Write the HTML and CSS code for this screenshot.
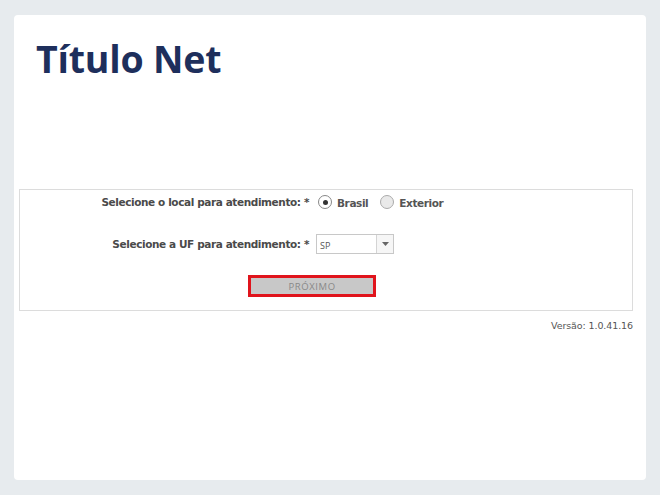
FILE: index.html
```html
<!DOCTYPE html>
<html lang="pt-BR">
<head>
<meta charset="utf-8">
<title>Título Net</title>
<link rel="stylesheet" href="styles.css">
</head>
<body>
<div class="card">
  <h1 class="title">Título Net</h1>
  <div class="form">
    <div class="row">
      <span class="label">Selecione o local para atendimento: *</span>
      <span class="radios">
        <span class="radio checked"></span><span class="opt">Brasil</span>
        <span class="radio"></span><span class="opt">Exterior</span>
      </span>
    </div>
    <div class="row row2">
      <span class="label">Selecione a UF para atendimento: *</span>
      <span class="select"><span class="val">SP</span><span class="arrow"><svg width="7" height="4" viewBox="0 0 7 4"><path d="M0 0h7L3.5 4z" fill="#666"/></svg></span></span>
    </div>
    <div class="btnrow">
      <span class="btn">PRÓXIMO</span>
    </div>
  </div>
  <div class="version">Versão: 1.0.41.16</div>
</div>
</body>
</html>
```
FILE: styles.css
```css
html, body { margin: 0; padding: 0; }
body {
  background: #e7ebee;
  width: 660px;
  height: 495px;
  padding: 15px 14px 15px 14px;
  box-sizing: border-box;
  font-family: "DejaVu Sans", Verdana, sans-serif;
}
.card {
  background: #fff;
  border-radius: 4px;
  height: 465px;
  padding: 0 13px 0 5px;
  box-sizing: border-box;
}
.title {
  margin: 0;
  padding: 20px 0 0 17px;
  height: 174px;
  box-sizing: border-box;
  font-family: "Open Sans", sans-serif;
  font-weight: 700;
  font-size: 37.5px;
  line-height: 48px;
  color: #1e2f5c;
  letter-spacing: -0.2px;
}
.form {
  border: 1px solid #dcdcdc;
  height: 122px;
  box-sizing: border-box;
  padding-top: 4px;
}
.row {
  display: flex;
  align-items: center;
  height: 16px;
}
.row2 { margin-top: 24px; height: 20px; }
.label {
  width: 289px;
  text-align: right;
  font-size: 10.5px;
  font-weight: bold;
  color: #4a4a4a;
  letter-spacing: -0.4px;
}
.radios { display: flex; align-items: center; margin-left: 9px; }
.radio {
  width: 14px; height: 14px;
  border-radius: 50%;
  border: 1px solid #aaa;
  box-sizing: border-box;
  background: #e9e9e9;
  display: flex; align-items: center; justify-content: center;
}
.radio.checked { background: #fff; border-color: #888; }
.radio.checked::after {
  content: ""; width: 5px; height: 5px; border-radius: 50%; background: #333;
}
.opt {
  font-size: 10.5px;
  font-weight: bold;
  color: #555;
  margin: 0 12px 0 5px;
  letter-spacing: -0.4px;
  padding-top: 2px;
}
.select {
  margin-left: 7px;
  width: 78px;
  height: 20px;
  border: 1px solid #c8c8c8;
  box-sizing: border-box;
  display: flex;
  background: #fff;
}
.val {
  flex: 1;
  font-size: 9px;
  color: #555;
  padding: 4px 0 0 3px;
  font-family: "Open Sans", sans-serif;
}
.arrow {
  width: 16px;
  border-left: 1px solid #d4d4d4;
  display: flex; align-items: center; justify-content: center;
  background: #f6f6f6;
}
.btnrow { display: flex; justify-content: center; margin-top: 21px; padding-right: 28px; }
.btn {
  width: 128px;
  height: 22px;
  box-sizing: border-box;
  border: 3px solid #e0141c;
  background: #c8c8c8;
  color: #888;
  font-size: 9.5px;
  letter-spacing: 0.6px;
  display: flex; align-items: center; justify-content: center;
  font-family: "Open Sans", sans-serif;
}
.version {
  text-align: right;
  font-size: 9.5px;
  color: #555;
  margin-top: 9px;
  letter-spacing: -0.1px;
}
```
